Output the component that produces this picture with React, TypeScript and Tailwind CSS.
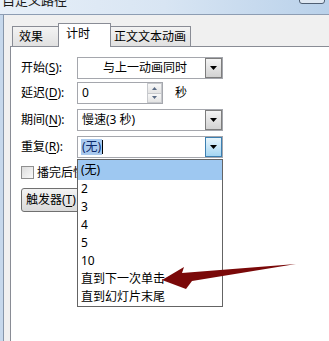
import React from "react";

function Caret() {
  return (
    <svg width="7" height="4" viewBox="0 0 7 4">
      <path d="M0 0 H7 L3.5 4 Z" fill="#000" />
    </svg>
  );
}

function DropBtn({ hot = false }: { hot?: boolean }) {
  return (
    <div
      className={
        hot
          ? "flex w-[17px] items-center justify-center border border-[#3c7fb1] bg-gradient-to-b from-[#e8f5fc] to-[#a4d6f3]"
          : "flex w-[17px] items-center justify-center border border-[#7d7d7d] bg-gradient-to-b from-[#f4f4f4] to-[#d2d2d2]"
      }
    >
      <Caret />
    </div>
  );
}

function Label({ t, k }: { t: string; k: string }) {
  return (
    <div className="w-[56px] shrink-0 leading-[22px]">
      {t}(<span className="underline underline-offset-2">{k}</span>):
    </div>
  );
}

export default function App() {
  return (
    <div className="relative h-[341px] w-[329px] overflow-hidden bg-[#f0f0f0] font-['Noto_Sans','Noto_Sans_CJK_SC',sans-serif] text-[12px] text-black">
      {/* title bar */}
      <div className="flex h-[15px] items-start overflow-hidden border-b border-[#8d9db3] bg-gradient-to-r from-[#e7eff8] via-[#d8e5f3] to-[#b9d1ea]">
        <span className="-mt-[6px] ml-[2px] text-[13px] leading-[13px] text-[#1b1b1b]">自定义路径</span>
        <div className="-mt-[10px] ml-auto mr-[4px] h-[14px] w-[26px] rounded-[3px] border border-[#4f5f73] bg-[#dfe8f2]" />
      </div>

      <div className="flex h-[326px]">
        <div className="w-[4px] border-r border-[#8696aa] bg-[#c6d8ec]" />
        <div className="flex flex-1 flex-col pl-[6px] pt-[8px]">
          {/* tabs */}
          <div className="flex h-[23px] items-end">
            <div className="ml-[2px] h-[20px] w-[47px] border-l border-r border-t border-[#898c95] bg-gradient-to-b from-[#f3f3f3] to-[#e1e1e1] pl-[6px] leading-[19px]">
              效果
            </div>
            <div className="relative z-10 -mb-px -ml-px h-[24px] w-[53px] border-l border-r border-t border-[#898c95] bg-white pl-[7px] leading-[20px]">
              计时
            </div>
            <div className="-ml-px h-[20px] w-[81px] border-r border-t border-[#898c95] bg-gradient-to-b from-[#f3f3f3] to-[#e1e1e1] pl-[4px] leading-[19px]">
              正文文本动画
            </div>
          </div>

          {/* panel */}
          <div className="flex flex-1 flex-col border-l border-t border-[#898c95] bg-white pl-[10px] pt-[10px]">
            <div className="flex h-[22px]">
              <Label t="开始" k="S" />
              <div className="flex w-[146px] border border-[#a5a7ad] bg-white">
                <div className="flex-1 pl-[25px] leading-[20px]">与上一动画同时</div>
                <DropBtn />
              </div>
            </div>

            <div className="mt-[3px] flex h-[22px]">
              <Label t="延迟" k="D" />
              <div className="flex w-[86px] border border-[#a5a7ad] bg-white">
                <div className="flex-1 pl-[4px] leading-[20px]">0</div>
                <div className="flex w-[15px] flex-col">
                  <div className="flex flex-1 items-center justify-center border border-[#c7c9cd] bg-gradient-to-b from-[#f8f8f8] to-[#e4e4e4]">
                    <svg width="5" height="3" viewBox="0 0 5 3">
                      <path d="M0 3 H5 L2.5 0 Z" fill="#5a6b85" />
                    </svg>
                  </div>
                  <div className="flex flex-1 items-center justify-center border border-t-0 border-[#c7c9cd] bg-gradient-to-b from-[#f8f8f8] to-[#e4e4e4]">
                    <svg width="5" height="3" viewBox="0 0 5 3">
                      <path d="M0 0 H5 L2.5 3 Z" fill="#5a6b85" />
                    </svg>
                  </div>
                </div>
              </div>
              <div className="ml-[12px] leading-[22px]">秒</div>
            </div>

            <div className="mt-[5px] flex h-[22px]">
              <Label t="期间" k="N" />
              <div className="flex w-[146px] border border-[#a5a7ad] bg-white">
                <div className="flex-1 pl-[4px] leading-[20px]">慢速(3 秒)</div>
                <DropBtn />
              </div>
            </div>

            <div className="mt-[5px] flex h-[22px]">
              <Label t="重复" k="R" />
              <div className="flex w-[146px] border border-[#a5a7ad] bg-white">
                <div className="flex flex-1 items-center pl-[3px]">
                  <span className="bg-[#a9c9ee] px-px leading-[16px] text-[#0d2a6b]">(无)</span>
                  <span className="h-[14px] w-px bg-black" />
                </div>
                <DropBtn hot />
              </div>
            </div>

            <div className="mt-[8px] flex h-[13px] items-center">
              <div className="h-[13px] w-[13px] border border-[#8f8f8f] bg-gradient-to-br from-[#dcdcdc] to-[#fbfbfb]" />
              <span className="ml-[3px] leading-[13px]">播完后快退</span>
            </div>

            <div className="mt-[9px] flex h-[24px] w-[76px] items-center rounded-[3px] border border-[#707070] bg-gradient-to-b from-[#f3f3f3] to-[#dadada] pl-[4px]">
              触发器(<span className="underline underline-offset-2">T</span>)
            </div>
          </div>
        </div>
      </div>

      {/* dropdown list */}
      <div className="absolute left-[77px] top-[159px] z-20 w-[146px] border border-[#646464] bg-white">
        <div className="h-[20px] bg-[#9ec8f1] pl-[3px] leading-[20px]">(无)</div>
        {["2", "3", "4", "5", "10", "直到下一次单击", "直到幻灯片末尾"].map((s) => (
          <div key={s} className="h-[18px] pl-[3px] leading-[18px]">
            {s}
          </div>
        ))}
      </div>

      {/* red arrow */}
      <svg className="pointer-events-none absolute left-0 top-0 z-30" width="329" height="341" viewBox="0 0 329 341">
        <polygon points="162,280 184,267 182,273 296,264 192,281 186,289" fill="#7a0909" />
      </svg>
    </div>
  );
}
